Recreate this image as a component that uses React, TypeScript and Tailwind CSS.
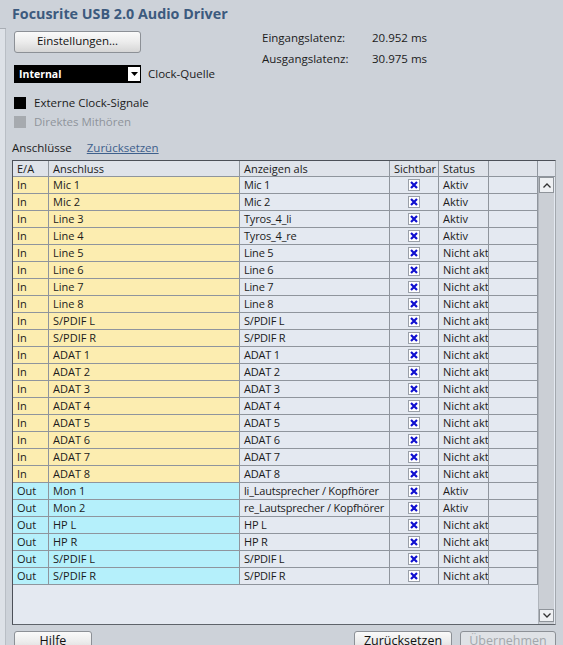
import React from "react";

type Row = { io: "In" | "Out"; port: string; label: string; status: string };

const rows: Row[] = [
  { io: "In", port: "Mic 1", label: "Mic 1", status: "Aktiv" },
  { io: "In", port: "Mic 2", label: "Mic 2", status: "Aktiv" },
  { io: "In", port: "Line 3", label: "Tyros_4_li", status: "Aktiv" },
  { io: "In", port: "Line 4", label: "Tyros_4_re", status: "Aktiv" },
  { io: "In", port: "Line 5", label: "Line 5", status: "Nicht aktiv" },
  { io: "In", port: "Line 6", label: "Line 6", status: "Nicht aktiv" },
  { io: "In", port: "Line 7", label: "Line 7", status: "Nicht aktiv" },
  { io: "In", port: "Line 8", label: "Line 8", status: "Nicht aktiv" },
  { io: "In", port: "S/PDIF L", label: "S/PDIF L", status: "Nicht aktiv" },
  { io: "In", port: "S/PDIF R", label: "S/PDIF R", status: "Nicht aktiv" },
  { io: "In", port: "ADAT 1", label: "ADAT 1", status: "Nicht aktiv" },
  { io: "In", port: "ADAT 2", label: "ADAT 2", status: "Nicht aktiv" },
  { io: "In", port: "ADAT 3", label: "ADAT 3", status: "Nicht aktiv" },
  { io: "In", port: "ADAT 4", label: "ADAT 4", status: "Nicht aktiv" },
  { io: "In", port: "ADAT 5", label: "ADAT 5", status: "Nicht aktiv" },
  { io: "In", port: "ADAT 6", label: "ADAT 6", status: "Nicht aktiv" },
  { io: "In", port: "ADAT 7", label: "ADAT 7", status: "Nicht aktiv" },
  { io: "In", port: "ADAT 8", label: "ADAT 8", status: "Nicht aktiv" },
  { io: "Out", port: "Mon 1", label: "li_Lautsprecher / Kopfhörer", status: "Aktiv" },
  { io: "Out", port: "Mon 2", label: "re_Lautsprecher / Kopfhörer", status: "Aktiv" },
  { io: "Out", port: "HP L", label: "HP L", status: "Nicht aktiv" },
  { io: "Out", port: "HP R", label: "HP R", status: "Nicht aktiv" },
  { io: "Out", port: "S/PDIF L", label: "S/PDIF L", status: "Nicht aktiv" },
  { io: "Out", port: "S/PDIF R", label: "S/PDIF R", status: "Nicht aktiv" },
];

function XBox() {
  return (
    <span className="flex h-[12px] w-[12px] items-center justify-center border border-[#9aa0a8] bg-white">
      <svg width="8" height="8" viewBox="0 0 8 8">
        <path d="M1 1L7 7M7 1L1 7" stroke="#1010d0" strokeWidth="2.2" />
      </svg>
    </span>
  );
}

function Cell({ w, className = "", children }: { w: string; className?: string; children?: React.ReactNode }) {
  return (
    <div className={`${w} h-full shrink-0 overflow-hidden whitespace-nowrap border-r border-[#8f959d] pl-[4px] leading-[16px] ${className}`}>
      {children}
    </div>
  );
}

function WinButton({ label, className = "", disabled = false }: { label: string; className?: string; disabled?: boolean }) {
  return (
    <div
      className={`flex h-[22px] shrink-0 items-start justify-center rounded-[3px] border border-[#8c9096] pt-[1px] ${
        disabled ? "bg-[#dfe2e6] text-[#a2a6ab]" : "bg-gradient-to-b from-[#fafafa] via-[#ececec] to-[#d6d6d6] text-[#111]"
      } ${className}`}
    >
      {label}
    </div>
  );
}

export default function App() {
  return (
    <div className="flex h-[645px] w-[563px] overflow-hidden bg-[#cdd2d9] font-['Open_Sans',sans-serif] text-[11.5px] leading-[16px] text-[#1b1b1b]">
      <div className="flex w-[6px] shrink-0 flex-col">
        <div className="h-[29px] border-b border-[#a9aeb5]" />
        <div className="flex-1 border-r border-[#b9bec5] bg-[#dde1e7]" />
      </div>

      <div className="flex flex-1 flex-col pl-[6px]">
        <h1 className="mt-[4px] h-[22px] shrink-0 text-[14.3px] font-bold leading-[20px] text-[#3c5a7e]">
          Focusrite USB 2.0 Audio Driver
        </h1>

        <div className="flex shrink-0 items-start">
          <div className="flex w-[250px] flex-col pl-[2px]">
            <WinButton label="Einstellungen..." className="mt-[5px] h-[20px] w-[127px]" />
            <div className="mt-[12px] flex items-center">
              <div className="flex h-[18px] w-[127px] items-center bg-black pl-[5px] pr-[1px]">
                <span className="flex-1 text-[10.5px] font-bold text-white">Internal</span>
                <span className="flex h-[14px] w-[12px] items-center justify-center bg-white">
                  <svg width="7" height="4" viewBox="0 0 7 4">
                    <path d="M0 0H7L3.5 4Z" fill="#000" />
                  </svg>
                </span>
              </div>
              <span className="ml-[7px]">Clock-Quelle</span>
            </div>
            <div className="mt-[12px] flex h-[16px] items-center gap-[8px]">
              <span className="h-[12px] w-[12px] bg-black" />
              <span>Externe Clock-Signale</span>
            </div>
            <div className="mt-[3px] flex h-[16px] items-center gap-[8px] text-[#8f949b]">
              <span className="h-[12px] w-[12px] bg-[#a6aaaf]" />
              <span>Direktes Mithören</span>
            </div>
          </div>
          <div className="grid grid-cols-[110px_auto] content-start gap-y-[5px] pt-[4px]">
            <span>Eingangslatenz:</span>
            <span>20.952 ms</span>
            <span>Ausgangslatenz:</span>
            <span>30.975 ms</span>
          </div>
        </div>

        <div className="mt-[10px] flex h-[16px] shrink-0 items-center">
          <span>Anschlüsse</span>
          <span className="ml-[15px] text-[#3e608c] underline">Zurücksetzen</span>
        </div>

        <div className="mt-[4px] flex h-[465px] w-[544px] shrink-0 flex-col border border-b-[#5e636a] border-l-[#4c5058] border-r-[#a3a8ae] border-t-[#4c5058] bg-[#e4e9f1] text-[11px]">
          <div className="flex h-[16px] shrink-0 border-b border-[#8f959d] bg-[#dfe3ea]">
            <Cell w="w-[36px]">E/A</Cell>
            <Cell w="w-[191px]">Anschluss</Cell>
            <Cell w="w-[150px]">Anzeigen als</Cell>
            <Cell w="w-[49px]">Sichtbar</Cell>
            <Cell w="w-[50px]">Status</Cell>
            <Cell w="w-[49px]" />
            <div className="flex-1" />
          </div>
          <div className="flex min-h-0 flex-1">
            <div className="flex w-[525px] flex-col">
              {rows.map((r, i) => {
                const tint = r.io === "In" ? "bg-[#fcedb0]" : "bg-[#b5f0fb]";
                return (
                  <div key={i} className="flex h-[17px] shrink-0 border-b border-[#8f959d] bg-[#e4e9f1]">
                    <Cell w="w-[36px]" className={tint}>{r.io}</Cell>
                    <Cell w="w-[191px]" className={tint}>{r.port}</Cell>
                    <Cell w="w-[150px]" className="tracking-[-0.2px]">{r.label}</Cell>
                    <Cell w="w-[49px]" className="flex items-center justify-center !pl-0">
                      <XBox />
                    </Cell>
                    <Cell w="w-[50px]">{r.status}</Cell>
                    <Cell w="w-[49px]" />
                  </div>
                );
              })}
            </div>
            <div className="flex w-[16px] flex-col border-l border-[#b0b5bc] bg-[#cbcfd5]">
              <div className="flex h-[16px] items-center justify-center border border-[#8f949a] bg-[#eef0f3]">
                <svg width="8" height="5" viewBox="0 0 8 5">
                  <path d="M0.5 4.5L4 1L7.5 4.5" stroke="#333" strokeWidth="1.3" fill="none" />
                </svg>
              </div>
              <div className="flex-1" />
              <div className="mb-[2px] flex h-[13px] items-center justify-center border border-[#8f949a] bg-[#eef0f3]">
                <svg width="8" height="5" viewBox="0 0 8 5">
                  <path d="M0.5 0.5L4 4L7.5 0.5" stroke="#333" strokeWidth="1.3" fill="none" />
                </svg>
              </div>
            </div>
          </div>
        </div>

        <div className="mt-[6px] flex shrink-0 pl-[2px]">
          <WinButton label="Hilfe" className="w-[78px] text-[12.5px]" />
          <div className="flex-1" />
          <WinButton label="Zurücksetzen" className="w-[98px] text-[12.5px]" />
          <WinButton label="Übernehmen" disabled className="ml-[8px] mr-[7px] w-[96px] text-[12.5px]" />
        </div>
      </div>
    </div>
  );
}
